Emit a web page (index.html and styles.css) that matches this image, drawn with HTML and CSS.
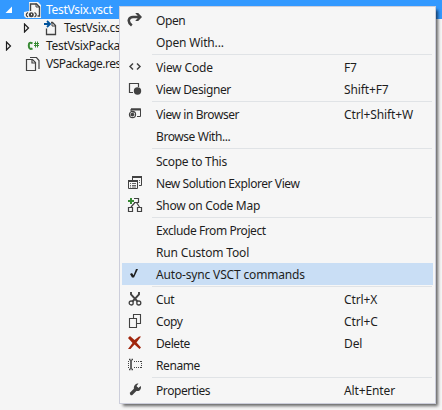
FILE: index.html
```html
<!DOCTYPE html>
<html lang="en">
<head>
<meta charset="utf-8">
<title>Solution Explorer</title>
<link rel="stylesheet" href="styles.css">
</head>
<body>
<div class="tree">
  <div class="node selected"><svg class="arrow" viewBox="0 0 8 10"><path d="M7 1.500v6.500H.5z" fill="#fff"/></svg>
    <svg class="file" viewBox="0 0 18 18"><path d="M5 1h9l3 3v13H2l-2-2v-4l5-1z" fill="#f5f5f5"/><path d="M6.500 10V3h6l3 3v9h-2" fill="none" stroke="#424242" stroke-width="1.400"/><path d="M12 2.500V6h4" fill="none" stroke="#424242"/><path d="M4 11.500Q.5 13.700 4 16M10.500 11.500q3.500 2.200 0 4.500" fill="none" stroke="#424242" stroke-width="1.200"/><circle cx="7.300" cy="13.800" r="2.500" fill="#424242"/><path d="M7 12.800h1v1.500H7z" fill="#fff"/></svg>
    <span>TestVsix.vsct</span></div>
  <div class="node child"><svg class="arrow" viewBox="0 0 8 10"><path d="M1.500 1v8l4-4z" fill="none" stroke="#1e1e1e" stroke-width="1.200"/></svg>
    <svg class="file" viewBox="0 0 18 18"><path d="M4.500 9.500v6h9v-9l-3-3H9" fill="none" stroke="#424242" stroke-width="1.300"/><path d="M10 3v4h4" fill="none" stroke="#424242"/><path d="M2 5h5M5 2l3 3-3 3" fill="none" stroke="#00539c" stroke-width="1.800"/></svg>
    <span>TestVsix.cs</span></div>
  <div class="node"><svg class="arrow" viewBox="0 0 8 10"><path d="M1.500 1v8l4-4z" fill="none" stroke="#1e1e1e" stroke-width="1.200"/></svg>
    <svg class="file" viewBox="0 0 18 18"><path d="M8.500 6.300C5.500 4.800 4.800 6.300 4.800 8.800s1.500 4 3.700 2.600" fill="none" stroke="#388a34" stroke-width="2"/><path d="M11.500 4.500v6M13.500 4.500v6M10 6.500h5M10 8.500h5" fill="none" stroke="#388a34"/></svg>
    <span>TestVsixPackage</span></div>
  <div class="node"><i class="arrow"></i>
    <svg class="file" viewBox="0 0 18 18"><path d="M2.500 4.500h6l3 3v8h-9z" fill="none" stroke="#424242" stroke-width="1.200"/><path d="M8 5v3h3M6 2.500h6.500l2.500 3V14" fill="none" stroke="#424242" stroke-width="1.200"/></svg>
    <span class="tight">VSPackage.resx</span></div>
</div>

<div class="menu">
  <div class="item"><svg viewBox="0 0 16 16"><path d="M4.800 13.500C-.5 9.500 2 5 6 5h6" fill="none" stroke="#424242" stroke-width="2.600"/><path d="M8.200 1h3l3.800 4-3.800 4h-3l3.500-4z" fill="#424242"/></svg><span>Open</span></div>
  <div class="item"><i></i><span class="wide">Open With...</span></div>
  <hr>
  <div class="item"><svg viewBox="0 0 16 16"><path d="M6 4.500 3 7.500l3 3M10 4.500l3 3-3 3" fill="none" stroke="#424242" stroke-width="1.500"/></svg><span class="wide">View Code</span><kbd>F7</kbd></div>
  <div class="item"><svg viewBox="0 0 16 16"><path d="M6 11.500H2.500v-9h9V6" fill="none" stroke="#424242" stroke-width="1.200"/><circle cx="10.500" cy="10" r="3.700" fill="#424242"/></svg><span>View Designer</span><kbd>Shift+F7</kbd></div>
  <hr>
  <div class="item"><svg viewBox="0 0 16 16"><path d="M4 5V3h9.500v7.500H10" fill="none" stroke="#424242"/><path d="M4 2.500h10v2H4z" fill="#424242"/><circle cx="5.500" cy="8.500" r="3.100" fill="none" stroke="#424242" stroke-width="1.100"/><path d="M3.500 7.500l3-1.500.5 2.500h1L6 10.500 3.500 10z" fill="#424242"/></svg><span>View in Browser</span><kbd>Ctrl+Shift+W</kbd></div>
  <div class="item"><i></i><span>Browse With...</span></div>
  <hr>
  <div class="item"><i></i><span class="mid">Scope to This</span></div>
  <div class="item"><svg viewBox="0 0 16 16"><path d="M5.500 5V1.500h9v9H12" fill="none" stroke="#424242"/><path d="M5 1h10v2H5zM1 5h10v2H1z" fill="#424242"/><path d="M1.500 5.500h9v8h-9z" fill="none" stroke="#424242"/><path d="M3 8.500h1m1 0h4M3 10.500h1m1 0h4M3 12h1m1 0h4M12 5.500h1M12 7.500h1" stroke="#424242" stroke-width=".8"/></svg><span>New Solution Explorer View</span></div>
  <div class="item"><svg viewBox="0 0 16 16"><path d="M7 1.500h4.500v4H7M8 5.500 4 10M9.500 5.500 12.500 10M1.500 10.500h4v4h-4zM10.500 10.500h4v4h-4z" fill="none" stroke="#424242" stroke-width="1.200"/><path d="M4 1v6M1 4h6" stroke="#388a34" stroke-width="2"/></svg><span class="mid">Show on Code Map</span></div>
  <hr>
  <div class="item"><i></i><span>Exclude From Project</span></div>
  <div class="item"><i></i><span class="wide">Run Custom Tool</span></div>
  <div class="item active"><svg viewBox="0 0 16 16"><path d="M3 8l2-1 1.500 2.300L9 3h2L7 11.500H5z" fill="#1e1e1e"/></svg><span class="wide">Auto-sync VSCT commands</span></div>
  <hr>
  <div class="item"><svg viewBox="0 0 16 16"><path d="M4 1v2.500l6.500 7M12 1v2.500L5.500 10.500" fill="none" stroke="#424242" stroke-width="1.900"/><circle cx="4.200" cy="12" r="2" fill="none" stroke="#424242" stroke-width="1.300"/><circle cx="11.800" cy="12" r="2" fill="none" stroke="#424242" stroke-width="1.300"/></svg><span>Cut</span><kbd>Ctrl+X</kbd></div>
  <div class="item"><svg viewBox="0 0 16 16"><path d="M2.500 5.500h7v9h-7z" fill="none" stroke="#424242" stroke-width="1.100"/><path d="M6.500 5V1.500h7v9H10" fill="none" stroke="#424242" stroke-width="1.100"/></svg><span>Copy</span><kbd>Ctrl+C</kbd></div>
  <div class="item"><svg viewBox="0 0 16 16"><path d="M1 3l2-2 4.500 4L12 1.500h2L9.500 7.500l4.500 5-1.500 1.500-5-4.500-4 4.500H1l4.500-6z" fill="#a1260d"/></svg><span>Delete</span><kbd>Del</kbd></div>
  <div class="item"><svg viewBox="0 0 16 16"><path d="M2 2.500h1.500m1 0H6M4 3v9M2 12.500h1.500m1 0H6" fill="none" stroke="#424242" stroke-width="1.600"/><path d="M7 4.500h8M7 10.500h8" stroke="#424242" stroke-dasharray="1 1"/><path d="M14.500 4v7M1.500 4v7" stroke="#424242" stroke-dasharray="1 1"/></svg><span>Rename</span></div>
  <hr>
  <div class="item"><svg viewBox="0 0 16 16"><path d="M4.500 11.500l5-5" stroke="#424242" stroke-width="3.200" stroke-linecap="round"/><path d="M11.500 1.500 9.500 4l1.700 1.900L13.800 4c.8 3-1 5.400-4 5L7 7c-.7-3 1.500-5.800 4.500-5.500z" fill="#424242"/></svg><span>Properties</span><kbd>Alt+Enter</kbd></div>
</div>
</body>
</html>
```
FILE: styles.css
```css
* { box-sizing: border-box; }
body {
  margin: 0;
  width: 442px;
  height: 410px;
  overflow: hidden;
  position: relative;
  background: #f5f5f5;
  color: #1e1e1e;
  font: 12px/18px "Noto Sans", "Open Sans", sans-serif;
  letter-spacing: -0.3px;
}
.node {
  display: flex;
  align-items: center;
  height: 18px;
  padding-left: 5px;
  white-space: nowrap;
}
.node.selected { height: 19px; padding-top: 1px; background: #3399ff; color: #fff; }
.node.child { padding-left: 23px; }
.node .arrow { width: 8px; height: 10px; margin-right: 11px; flex: none; }
.node .file { width: 18px; height: 18px; margin-right: 4px; flex: none; }
.node .tight { letter-spacing: -0.5px; }
.menu {
  position: absolute;
  left: 119px;
  top: 6px;
  width: 317px;
  height: 398px;
  padding: 2px;
  background: #f6f6f6;
  border: 1px solid #cccedb;
  box-shadow: 3px 3px 3px -1px rgba(0, 0, 0, .6);
}
.item {
  display: flex;
  align-items: center;
  height: 22px;
  padding-left: 5px;
  white-space: nowrap;
}
.item.active { background: #c9def5; }
.item svg, .item i { width: 16px; height: 16px; margin-right: 13px; flex: none; }
.item span { width: 188px; padding-top: 2px; letter-spacing: -0.42px; }
.item .mid { letter-spacing: -0.28px; }
.item .wide { letter-spacing: -0.16px; }
.item kbd { font: inherit; padding-top: 2px; letter-spacing: -0.12px; }
.menu hr {
  height: 1px;
  margin: 1px 1px 1px 30px;
  border: 0;
  background: #e0e3e6;
}
```
